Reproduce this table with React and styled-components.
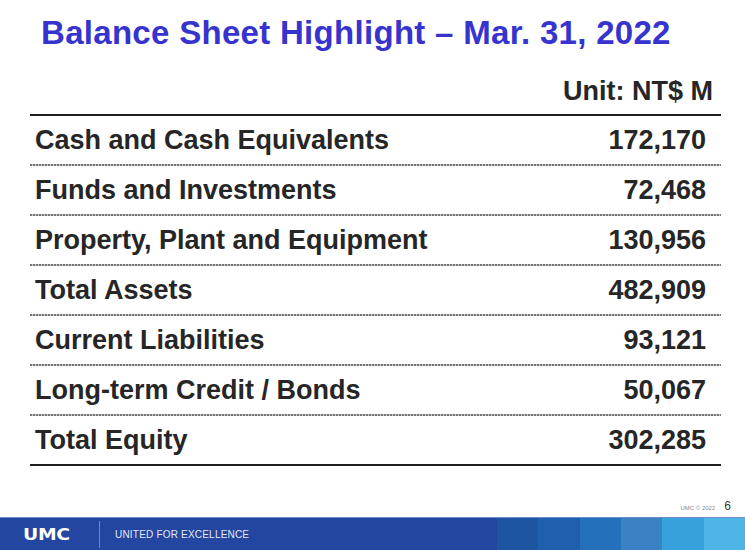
import styled, { createGlobalStyle } from 'styled-components'

const GlobalStyle = createGlobalStyle`
  html, body {
    margin: 0;
    padding: 0;
    background: #fff;
  }
  body {
    font-family: 'Liberation Sans', Arial, sans-serif;
  }
`

const rows = [
  { label: 'Cash and Cash Equivalents', value: '172,170' },
  { label: 'Funds and Investments', value: '72,468' },
  { label: 'Property, Plant and Equipment', value: '130,956' },
  { label: 'Total Assets', value: '482,909' },
  { label: 'Current Liabilities', value: '93,121' },
  { label: 'Long-term Credit / Bonds', value: '50,067' },
  { label: 'Total Equity', value: '302,285' }
]

const stripes = ['#1e55a3', '#205fad', '#2570ba', '#3a82c3', '#37a1dc', '#4fb4e6']

const Slide = styled.div`
  width: 745px;
  height: 550px;
  display: flex;
  flex-direction: column;
  overflow: hidden;
  color: #262626;
`

const Title = styled.h1`
  margin: 0;
  padding: 17px 0 0 41px;
  font-size: 33px;
  line-height: 32px;
  font-weight: 700;
  letter-spacing: 0.3px;
  color: #3633cf;
`

const Unit = styled.div`
  margin-top: 29px;
  padding-right: 32px;
  text-align: right;
  font-size: 27px;
  line-height: 27px;
  font-weight: 700;
`

const Table = styled.div`
  margin: 9px 24px 0 30px;
  border-top: 2px solid #1e1e1e;
  border-bottom: 2px solid #1e1e1e;
`

const Row = styled.div`
  height: 48px;
  display: flex;
  align-items: center;
  justify-content: space-between;
  padding: 0 15px 0 5px;
  font-size: 27px;
  line-height: 27px;
  font-weight: 700;
  &:not(:last-child) {
    padding-bottom: 2px;
    background: repeating-linear-gradient(90deg, #747474 0 2px, #cacaca 2px 3px) bottom / 100% 2px no-repeat;
  }
`

const PageMark = styled.div`
  margin-top: 35px;
  padding-right: 14px;
  display: flex;
  justify-content: flex-end;
  align-items: baseline;
  gap: 9px;
  line-height: 11px;
  height: 11px;
`

const Copy = styled.span`
  font-size: 6px;
  color: #8a8a8a;
`

const PageNo = styled.span`
  font-size: 12px;
  color: #3a3a3a;
`

const Bar = styled.div`
  margin-top: 5px;
  height: 32px;
  display: flex;
  background: #2346a0;
  border-top: 1px solid #6d8dcf;
`

const Brand = styled.div`
  flex: 1;
  display: flex;
  align-items: center;
`

const Logo = styled.span`
  display: inline-block;
  margin-left: 23px;
  width: 76px;
  font-family: 'DejaVu Sans', sans-serif;
  font-size: 16.5px;
  font-weight: 700;
  color: #fff;
  transform: scaleX(1.14);
  transform-origin: left center;
  letter-spacing: -0.3px;
`

const Divider = styled.span`
  width: 1px;
  height: 27px;
  background: rgba(255, 255, 255, 0.35);
  margin-right: 15px;
`

const Tagline = styled.span`
  font-size: 10px;
  color: #e2e8f6;
  letter-spacing: 0.2px;
`

const Stripes = styled.div`
  width: 248px;
  display: flex;
`

const Stripe = styled.div`
  flex: 1;
  background: ${props => props.$color};
`

export default function App() {
  return (
    <Slide>
      <GlobalStyle />
      <Title>Balance Sheet Highlight – Mar. 31, 2022</Title>
      <Unit>Unit: NT$ M</Unit>
      <Table>
        {rows.map(r => (
          <Row key={r.label}>
            <span>{r.label}</span>
            <span>{r.value}</span>
          </Row>
        ))}
      </Table>
      <PageMark>
        <Copy>UMC © 2022</Copy>
        <PageNo>6</PageNo>
      </PageMark>
      <Bar>
        <Brand>
          <Logo>UMC</Logo>
          <Divider />
          <Tagline>UNITED FOR EXCELLENCE</Tagline>
        </Brand>
        <Stripes>
          {stripes.map(c => (
            <Stripe key={c} $color={c} />
          ))}
        </Stripes>
      </Bar>
    </Slide>
  )
}
